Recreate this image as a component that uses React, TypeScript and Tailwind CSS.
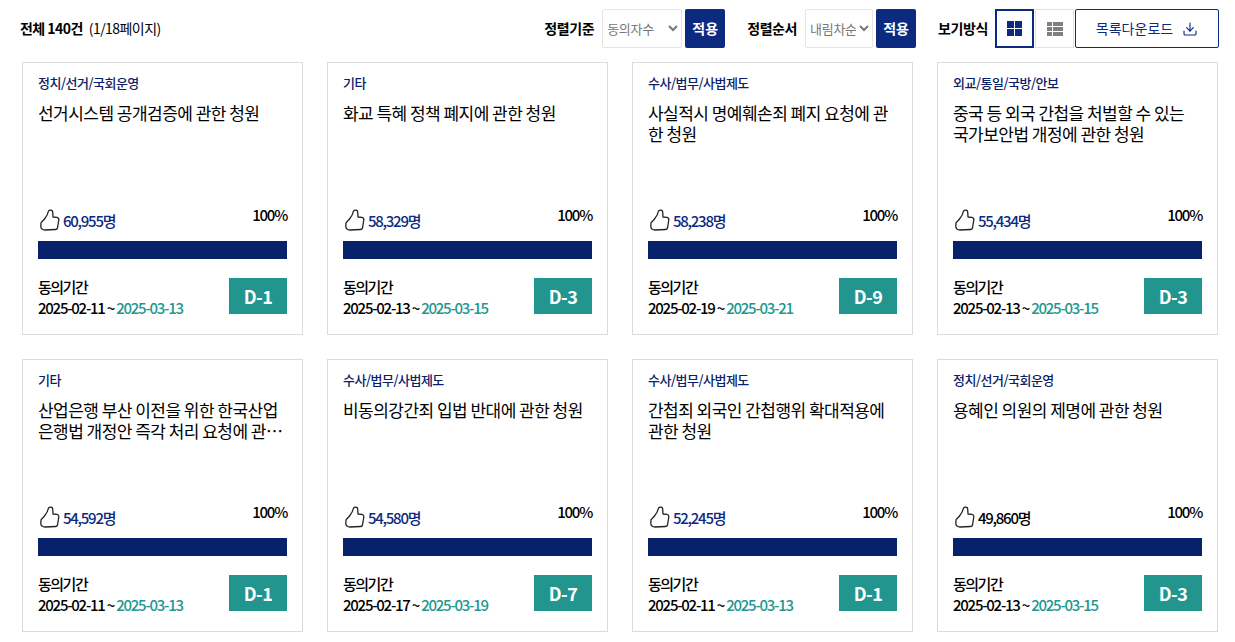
import { Download } from "lucide-react";

const petitions = [
  { cat: "정치/선거/국회운영", title: "선거시스템 공개검증에 관한 청원", count: "60,955명", start: "2025-02-11", end: "2025-03-13", d: "D-1" },
  { cat: "기타", title: "화교 특혜 정책 폐지에 관한 청원", count: "58,329명", start: "2025-02-13", end: "2025-03-15", d: "D-3" },
  { cat: "수사/법무/사법제도", title: "사실적시 명예훼손죄 폐지 요청에 관한 청원", count: "58,238명", start: "2025-02-19", end: "2025-03-21", d: "D-9" },
  { cat: "외교/통일/국방/안보", title: "중국 등 외국 간첩을 처벌할 수 있는 국가보안법 개정에 관한 청원", count: "55,434명", start: "2025-02-13", end: "2025-03-15", d: "D-3" },
  { cat: "기타", title: "산업은행 부산 이전을 위한 한국산업은행법 개정안 즉각 처리 요청에 관한 청원", count: "54,592명", start: "2025-02-11", end: "2025-03-13", d: "D-1" },
  { cat: "수사/법무/사법제도", title: "비동의강간죄 입법 반대에 관한 청원", count: "54,580명", start: "2025-02-17", end: "2025-03-19", d: "D-7" },
  { cat: "수사/법무/사법제도", title: "간첩죄 외국인 간첩행위 확대적용에 관한 청원", count: "52,245명", start: "2025-02-11", end: "2025-03-13", d: "D-1" },
  { cat: "정치/선거/국회운영", title: "용혜인 의원의 제명에 관한 청원", count: "49,860명", start: "2025-02-13", end: "2025-03-15", d: "D-3", dark: true },
];

function SortControl({ label, value, width }: { label: string; value: string; width: string }) {
  return (
    <div className="flex items-center gap-[8px]">
      <span className="text-[14px] font-bold tracking-[-0.4px] text-black">{label}</span>
      <div className="flex items-center gap-[3px]">
        <select defaultValue={value} className={`${width} h-[39px] rounded-[2px] border border-[#e5e5e5] bg-white pl-0 text-[13px] tracking-[-0.3px] text-[#777]`}>
          <option>{value}</option>
        </select>
        <button className="h-[39px] w-[40px] rounded-[2px] bg-[#0c2a7f] text-[14px] font-bold text-white">적용</button>
      </div>
    </div>
  );
}

function ThumbIcon() {
  return (
    <svg width="20" height="22" viewBox="0 0 20 22" fill="none" stroke="#222" strokeWidth="1.3" strokeLinejoin="round" className="mt-[5px] ml-[2px] shrink-0">
      <path d="M8.5 2C10 .7 12.7 1 12.7 3L13 8L17 8.3C18.5 8.6 19 9.5 18.8 11L17.5 19C17.2 20 16.5 20.5 15.5 20.5L5 21C2.5 21 .8 19.5 .8 17.5L1 14C1 13 3 12 4.5 10C6.5 7.5 8 5 8.5 2Z" />
    </svg>
  );
}

function Card({ p }: { p: (typeof petitions)[number] }) {
  return (
    <div className="flex h-[273px] flex-col border border-[#dcdcdc] bg-white px-[15px] pt-[11px]">
      <div className="h-[18px] text-[13px] font-medium leading-[18px] tracking-[-0.5px] text-[#0a2169]">{p.cat}</div>
      <div className="mt-[10px] line-clamp-2 h-[42px] text-[17px] leading-[21px] tracking-[-0.53px] text-black">{p.title}</div>
      <div className="mt-[60px] flex h-[35px] items-start justify-between">
        <div className="flex items-start gap-[3px]">
          <ThumbIcon />
          <span className={`mt-[7px] text-[15px] font-medium leading-[20px] tracking-[-1.25px] ${p.dark ? "text-black" : "text-[#0c2a7f]"}`}>{p.count}</span>
        </div>
        <span className="mt-[1px] text-[15px] font-medium leading-[20px] tracking-[-1.25px] text-black">100%</span>
      </div>
      <div className="mt-[2px] h-[18px] w-full bg-[#08216b]" />
      <div className="mt-[19px] flex items-start justify-between">
        <div className="-mt-[2px] text-[15px] font-medium leading-[21px] tracking-[-1.25px] text-black">
          <div className="tracking-[-1.5px]">동의기간</div>
          <div>
            {p.start} ~ <span className="text-[#229790]">{p.end}</span>
          </div>
        </div>
        <div className="flex h-[36px] w-[58px] items-center justify-center bg-[#21958e] text-[18px] font-bold tracking-[-0.5px] text-white">{p.d}</div>
      </div>
    </div>
  );
}

export default function App() {
  return (
    <div className="min-h-[642px] overflow-hidden bg-white font-['Noto_Sans_CJK_KR','Noto_Sans',sans-serif]">
      <div className="flex h-[62px] items-center justify-between pb-[5px] pl-[20px] pr-[16px]">
        <div className="flex items-baseline gap-[6px] text-[14px] tracking-[-0.55px] text-black">
          <span className="font-bold">전체 140건</span>
          <span>(1/18페이지)</span>
        </div>
        <div className="flex items-center">
          <SortControl label="정렬기준" value="동의자수" width="w-[80px]" />
          <div className="ml-[22px]">
            <SortControl label="정렬순서" value="내림차순" width="w-[68px]" />
          </div>
          <span className="ml-[22px] text-[14px] font-bold tracking-[-0.4px] text-black">보기방식</span>
          <div className="ml-[7px] flex items-center gap-[1px]">
            <button className="flex h-[39px] w-[39px] items-center justify-center border-[2px] border-[#0c2a7f]">
              <svg width="15" height="15" viewBox="0 0 15 15" fill="#0c2a7f">
                <rect x="0" y="0" width="7" height="7" />
                <rect x="8" y="0" width="7" height="7" />
                <rect x="0" y="8" width="7" height="7" />
                <rect x="8" y="8" width="7" height="7" />
              </svg>
            </button>
            <button className="flex h-[39px] w-[39px] items-center justify-center border border-[#e2e2e2]">
              <svg width="16" height="14" viewBox="0 0 16 14" fill="#808080">
                <rect x="0" y="0" width="5" height="4" />
                <rect x="6" y="0" width="10" height="4" />
                <rect x="0" y="5" width="5" height="4" />
                <rect x="6" y="5" width="10" height="4" />
                <rect x="0" y="10" width="5" height="4" />
                <rect x="6" y="10" width="10" height="4" />
              </svg>
            </button>
            <button className="flex h-[39px] w-[144px] items-center justify-center gap-[9px] rounded-[2px] border border-[#0c2a7f] text-[14px] text-[#0c2a7f]">
              목록다운로드
              <Download size={16} strokeWidth={1.7} />
            </button>
          </div>
        </div>
      </div>
      <div className="grid grid-cols-[repeat(4,281px)] gap-[24px] pl-[22px]">
        {petitions.map((p, i) => (
          <Card key={i} p={p} />
        ))}
      </div>
    </div>
  );
}
